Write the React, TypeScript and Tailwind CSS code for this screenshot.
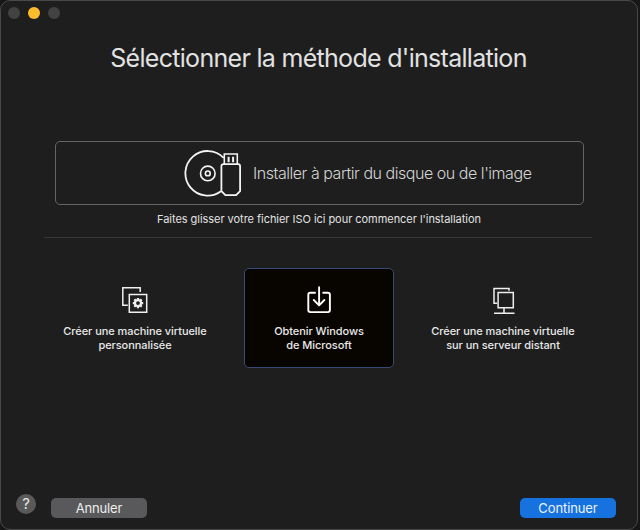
import type { ReactNode } from "react";

function DiscAndUsb() {
  return (
    <svg width="60" height="48" viewBox="184 149 60 48" fill="none" stroke="#f4f4f4" strokeWidth="1.8" className="shrink-0">
      <path d="M221 191.2A22.3 22.3 0 1 1 223.7 157.8" />
      <circle cx="207.8" cy="173.4" r="7.3" strokeWidth="1.6" />
      <circle cx="207.8" cy="173.4" r="2.4" strokeWidth="1.6" />
      <path d="M224.3 164V154h13v10" strokeWidth="1.6" />
      <path d="M223.4 164.2h14.7a2 2 0 0 1 2 2v25l-4 4h-10.7l-4-4v-25a2 2 0 0 1 2-2z" strokeLinejoin="round" />
      <path d="M228.6 156.8v5.4M233.1 156.8v5.4" strokeWidth="2" />
    </svg>
  );
}

function CustomMachine() {
  return (
    <svg width="28" height="28" viewBox="121 286 28 28" fill="none" stroke="#efefef" strokeWidth="1.5">
      <path d="M140.2 292v-4.2h-17.4v17.5h5" />
      <path d="M129.3 294.5h17.4v17.8h-17.4z" />
      <circle cx="138" cy="303.1" r="3" strokeWidth="2.2" />
      <path
        d="M138 297.9v2M138 306.3v2M132.8 303.1h2M141.2 303.1h2M134.3 299.4l1.4 1.4M140.3 305.4l1.4 1.4M134.3 306.8l1.4-1.4M140.3 300.8l1.4-1.4"
        strokeWidth="2.2"
      />
    </svg>
  );
}

function Download() {
  return (
    <svg width="28" height="28" viewBox="305 286 28 28" fill="none" stroke="#fff" strokeWidth="1.9" strokeLinecap="round" strokeLinejoin="round">
      <path d="M315 292.8h-4.7a2 2 0 0 0-2 2v15.3a2 2 0 0 0 2 2h17.6a2 2 0 0 0 2-2v-15.3a2 2 0 0 0-2-2h-4.7" />
      <path d="M319.1 287.2V305M313.8 300l5.3 5.3 5.3-5.3" />
    </svg>
  );
}

function RemoteMachine() {
  return (
    <svg width="28" height="28" viewBox="489 286 28 28" fill="none" stroke="#efefef" strokeWidth="1.5">
      <path d="M509 290.8v-2.2h-15v14.7h3.2" />
      <path d="M498.1 292.5h15.2v15.2h-15.2zM504 308v5M494 313.2h20.5" />
    </svg>
  );
}

function Choice({ icon, lines, selected = false }: { icon: ReactNode; lines: string[]; selected?: boolean }) {
  return (
    <button
      className={`flex h-[100px] w-[150px] shrink-0 flex-col items-center rounded-[5px] border pt-[17px] ${
        selected ? "border-[#3b4a75] bg-[#080500]" : "border-transparent"
      }`}
    >
      {icon}
      <span className="mt-[10px] flex flex-col items-center text-[11px] leading-[14px] font-medium tracking-[-0.06px] whitespace-nowrap text-[#e8e8e8]">
        {lines.map((line) => (
          <span key={line}>{line}</span>
        ))}
      </span>
    </button>
  );
}

export default function App() {
  return (
    <div className="h-[530px] w-[640px] overflow-hidden bg-[#171717] pr-[2px] font-['Inter',sans-serif]">
      <main className="flex h-[530px] w-[638px] flex-col rounded-[10px] border border-[#484848] bg-[#1e1e1e]">
        <div className="flex h-[24px] shrink-0 gap-2 pt-[6px] pl-[7px]">
          <span className="size-3 rounded-full bg-[#424242]" />
          <span className="size-3 rounded-full bg-[#fdbc2e]" />
          <span className="size-3 rounded-full bg-[#424242]" />
        </div>
        <h1 className="mt-[16px] h-[34px] pr-[1px] text-center text-[25px] leading-[34px] tracking-[-0.7px] whitespace-nowrap text-[#e2e2e2]">
          Sélectionner la méthode d'installation
        </h1>
        <button className="mt-[66px] ml-[54px] flex h-[64px] w-[529px] shrink-0 items-center rounded-[5px] border border-[#656565] pl-[128px]">
          <DiscAndUsb />
          <span className="ml-[9px] text-[16px] leading-[24px] font-light tracking-[-0.46px] whitespace-nowrap text-[#d4d4d4]">
            Installer à partir du disque ou de l'image
          </span>
        </button>
        <p className="mt-[5px] h-[18px] text-center text-[11px] leading-[18px] tracking-[-0.04px] whitespace-nowrap text-[#e2e2e2]">
          Faites glisser votre fichier ISO ici pour commencer l'installation
        </p>
        <hr className="mt-[9px] ml-[43px] w-[548px] border-[#363636]" />
        <div className="mt-[30px] ml-[59px] flex gap-[34px]">
          <Choice icon={<CustomMachine />} lines={["Créer une machine virtuelle", "personnalisée"]} />
          <Choice icon={<Download />} lines={["Obtenir Windows", "de Microsoft"]} selected />
          <Choice icon={<RemoteMachine />} lines={["Créer une machine virtuelle", "sur un serveur distant"]} />
        </div>
        <footer className="mt-auto flex h-[35px] shrink-0 items-start pl-[15px]">
          <button className="flex size-[20px] items-center justify-center rounded-full bg-[#59595a] text-[15px] text-[#e5e5e5]">?</button>
          <button className="mt-[4px] ml-[15px] h-[20px] w-[96px] rounded-[5px] bg-[#59595b] text-[13px] leading-[20px] tracking-[-0.15px] text-[#ededed]">Annuler</button>
          <button className="mt-[4px] ml-[373px] h-[20px] w-[96px] rounded-[5px] bg-[#1672df] text-[13px] leading-[20px] tracking-[-0.1px] text-[#edf4ff]">Continuer</button>
        </footer>
      </main>
    </div>
  );
}
